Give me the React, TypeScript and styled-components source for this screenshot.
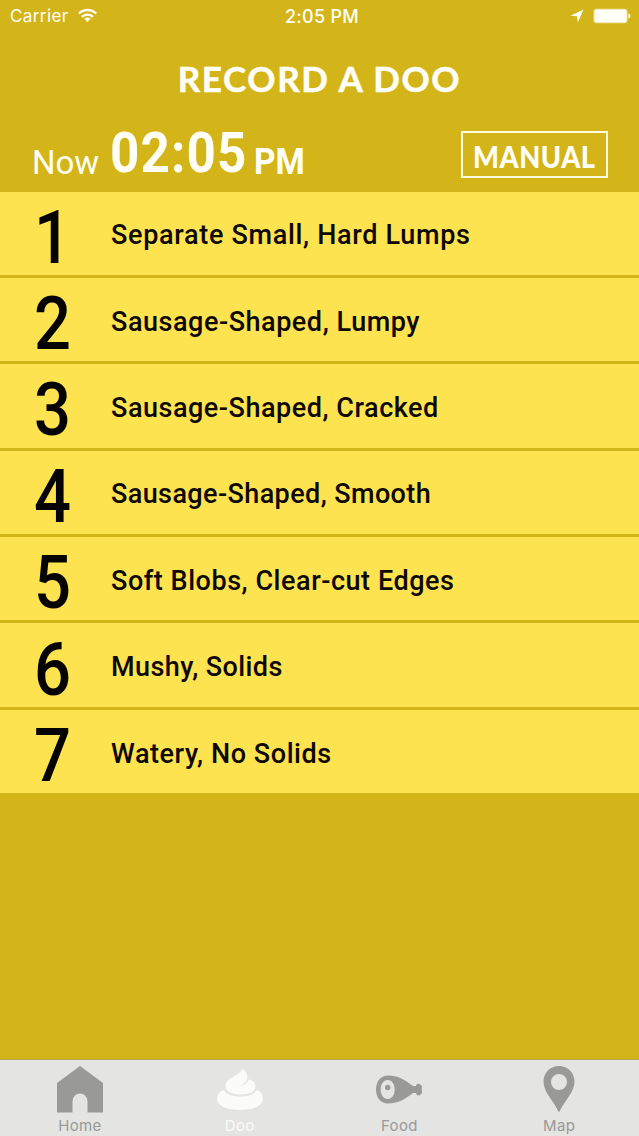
import React from "react";
import styled, { createGlobalStyle } from "styled-components";

const GlobalStyle = createGlobalStyle`
  * { box-sizing: border-box; }
  body { margin: 0; background: #d4b519; }
`;

const Screen = styled.div`
  display: flex;
  flex-direction: column;
  width: 639px;
  height: 1136px;
  overflow: hidden;
  background: #d4b519;
  color: #fffff8;
  font-family: Roboto, "Liberation Sans", sans-serif;
`;

const StatusBar = styled.div`
  display: grid;
  grid-template-columns: 1fr auto 1fr;
  align-items: center;
  height: 32px;
  padding: 1px 8px 0 10px;
  font-family: Inter, sans-serif;
  font-size: 17px;
  line-height: 31px;
`;

const Carrier = styled.div`
  display: flex;
  align-items: center;
  gap: 9px;
  letter-spacing: 0.4px;
  svg { margin-top: -2px; }
`;

const Clock = styled.div`
  font-size: 18px;
  font-weight: 500;
  letter-spacing: 0.3px;
  margin-left: 3px;
`;

const Indicators = styled.div`
  display: flex;
  align-items: center;
  justify-content: flex-end;
  gap: 9px;
  margin-top: -1px;
`;

const Title = styled.h1`
  margin: 0;
  height: 95px;
  padding-top: 25px;
  text-align: center;
  font: 700 35px/42px Lato, sans-serif;
  -webkit-text-stroke: 0.5px currentColor;
  letter-spacing: 1.6px;
`;

const TimeRow = styled.div`
  display: flex;
  justify-content: space-between;
  height: 64.5px;
  padding: 0 31px 0 32px;
`;

const TimeGroup = styled.div`
  display: flex;
  align-items: baseline;
  height: 60px;
  margin-top: -1px;
`;

const Stretch = styled.span<{
  $size: number;
  $weight: number;
  $width: number;
  $scale: number;
  $track?: number;
  $line?: number;
}>`
  display: block;
  width: ${(p) => p.$width}px;
  font-size: ${(p) => p.$size}px;
  line-height: ${(p) => p.$line ?? 60}px;
  font-weight: ${(p) => p.$weight};
  letter-spacing: ${(p) => p.$track ?? 0}px;
  white-space: nowrap;
  transform: scaleX(${(p) => p.$scale});
  transform-origin: 0 50%;
`;

const TimeDigits = styled.span`
  display: block;
  width: 144px;
  font-size: 55px;
  line-height: 58px;
  font-weight: 700;
  letter-spacing: 1.2px;
  transform: translateY(-2px) scaleX(0.93);
  transform-origin: 0 50%;
`;

const ManualButton = styled.button`
  width: 147px;
  height: 47px;
  margin: 4px 0 0;
  padding: 2px 0 0 10px;
  border: 2px solid #fffbe0;
  background: none;
  color: inherit;
  font-family: Lato, sans-serif;
  text-align: left;
`;

const List = styled.ol`
  display: grid;
  grid-template-rows: repeat(7, 83.4px);
  row-gap: 3px;
  margin: 0;
  padding: 0;
  list-style: none;
`;

const Item = styled.li`
  display: flex;
  align-items: center;
  padding-left: 34px;
  background: #fde350;
  color: #0d0800;
`;

const Numeral = styled.span`
  width: 77px;
  padding-top: 9px;
  font-size: 74px;
  line-height: 78px;
  font-weight: 500;
  color: #050300;
  transform: scaleX(0.88);
  transform-origin: 0 50%;
`;

const Label = styled.span<{ $track: number }>`
  padding-top: 4px;
  font-size: 27px;
  line-height: 32px;
  font-weight: 500;
  letter-spacing: ${(p) => p.$track}px;
  white-space: nowrap;
`;

const TabBar = styled.nav`
  display: grid;
  grid-template-columns: repeat(4, 1fr);
  height: 77px;
  margin-top: auto;
  border-top: 1px solid #b8a552;
  background: #e4e4e3;
`;

const Tab = styled.div<{ $active?: boolean }>`
  display: flex;
  flex-direction: column;
  align-items: center;
  padding-top: 5px;
  color: ${(p) => (p.$active ? "#fbfbf8" : "#999998")};
  font: 400 15px/20px Inter, sans-serif;
  letter-spacing: 0.3px;
  svg { display: block; margin-bottom: 1px; }
`;

const HomeIcon = () => (
  <svg width="48" height="50" viewBox="0 0 48 50" fill="currentColor">
    <path d="M24 1 47 18V47.500H31.500V36a7.500 7.500 0 0 0-15 0V47.500H1V18Z" />
  </svg>
);

const DooIcon = () => (
  <svg width="48" height="50" viewBox="0 0 48 50" fill="currentColor">
    <path d="M25.500 3.500C26.500 10 9.500 12 9.500 21c0 5.500 6.500 8.500 15 8.500 9 0 15-3 15-8 0-4-3-7-7-7-1 4-5.500 6.500-10 6 3.500-.5 9-3.500 9-8.500 0-4-2.500-6.500-6-8.500Z" />
    <path d="M8 25C4 26 1 29.500 1 33.500 1 41 11 45 24 45s23-4 23-11.500c0-4-2.500-7.500-6.500-8.500-2 4.500-8 6.500-16 6.500S10 29.500 8 25Z" />
  </svg>
);

const FoodIcon = () => (
  <svg width="48" height="50" viewBox="0 0 48 50" fill="currentColor">
    <path fillRule="evenodd" d="M13 10.500c10 0 16 4 25 10.500h3c0-2.500 3.500-3 4.500-1 1.500.5 2 2 1 4.500 1 2.500.5 4.500-1 5-1 2-4.500 1-4.500-1.500h-3C29 35 22 38.500 13 38.500 5 38.500 1 32 1 24.500s4-14 12-14Zm-.3 4.500C8.200 15 5.700 19.500 5.700 24.500s2.500 9.500 7 9.500 7-4.500 7-9.500-2.500-9.500-7-9.500Z" />
    <ellipse cx="12.700" cy="22.500" rx="2.700" ry="2.700" />
  </svg>
);

const MapIcon = () => (
  <svg width="48" height="50" viewBox="0 0 48 50" fill="currentColor">
    <path fillRule="evenodd" d="M24 1c8.700 0 15.500 6.800 15.500 15.500C39.500 27 30 35 24 47.500 18 35 8.500 27 8.500 16.500 8.500 7.800 15.300 1 24 1Zm0 8a8 8 0 1 0 0 16 8 8 0 0 0 0-16Z" />
  </svg>
);

const rows = [
  { text: "Separate Small, Hard Lumps", track: 0.68 },
  { text: "Sausage-Shaped, Lumpy", track: 0.54 },
  { text: "Sausage-Shaped, Cracked", track: 0.53 },
  { text: "Sausage-Shaped, Smooth", track: 0.4 },
  { text: "Soft Blobs, Clear-cut Edges", track: 0.54 },
  { text: "Mushy, Solids", track: 0.42 },
  { text: "Watery, No Solids", track: 0.57 },
];

export default function App() {
  return (
    <Screen>
      <GlobalStyle />
      <StatusBar>
        <Carrier>
          Carrier
          <svg width="19" height="15" viewBox="0 0 19 15" fill="none" stroke="currentColor" strokeWidth="2.300">
            <path d="M.8 5.500C5.800.8 13.200.8 18.200 5.500M4 8.800c3.200-2.900 7.800-2.900 11 0" />
            <path d="m9.500 14-3.200-3.300q3.200-2.300 6.400 0Z" fill="currentColor" stroke="none" />
          </svg>
        </Carrier>
        <Clock>2:05 PM</Clock>
        <Indicators>
          <svg width="14" height="14" viewBox="0 0 14 14" fill="currentColor">
            <path d="M13.500.5 7.800 13.500 7 7.300.5 6.700Z" />
          </svg>
          <svg width="38" height="16" viewBox="0 0 38 16" fill="currentColor">
            <rect x=".5" y=".8" width="34" height="14.400" rx="3" opacity=".65" />
            <rect x="1.500" y="1.800" width="32" height="12.400" rx="2" />
            <path d="M35.500 5.500q2 .6 2 2.500t-2 2.500Z" />
          </svg>
        </Indicators>
      </StatusBar>
      <Title>RECORD A DOO</Title>
      <TimeRow>
        <TimeGroup>
          <Stretch $size={33} $weight={400} $width={78} $scale={1}>Now</Stretch>
          <TimeDigits>02:05</TimeDigits>
          <Stretch $size={36} $weight={700} $width={60} $scale={0.93}>PM</Stretch>
        </TimeGroup>
        <ManualButton>
          <Stretch $size={31} $weight={900} $width={126} $scale={0.88} $track={0.6} $line={36}>MANUAL</Stretch>
        </ManualButton>
      </TimeRow>
      <List>
        {rows.map((row, i) => (
          <Item key={row.text}>
            <Numeral>{i + 1}</Numeral>
            <Label $track={row.track}>{row.text}</Label>
          </Item>
        ))}
      </List>
      <TabBar>
        <Tab><HomeIcon />Home</Tab>
        <Tab $active><DooIcon />Doo</Tab>
        <Tab><FoodIcon />Food</Tab>
        <Tab><MapIcon />Map</Tab>
      </TabBar>
    </Screen>
  );
}
